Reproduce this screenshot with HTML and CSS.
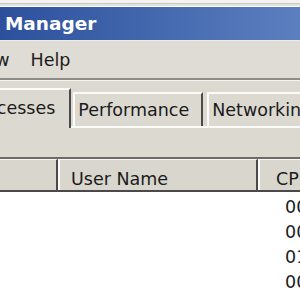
FILE: index.html
```html
<!DOCTYPE html>
<html lang="en">

<head>
    <meta charset="UTF-8">
    <title>Windows Task Manager</title>
    <link rel="stylesheet" href="styles.css">
</head>

<body>
    <div class="window">
        <div class="frame-top"></div>
        <div class="titlebar">
            <span class="title">Windows Task Manager</span>
        </div>
        <div class="menubar">
            <span class="menu-item">View</span>
            <span class="menu-item">Help</span>
        </div>
        <div class="panel">
            <div class="tabs">
                <div class="tab active">Processes</div>
                <div class="tab">Performance</div>
                <div class="tab">Networking</div>
            </div>
            <div class="list">
                <div class="list-head">
                    <div class="col"></div>
                    <div class="col user">User Name</div>
                    <div class="col cpu">CPU</div>
                </div>
                <div class="rows">
                    <div class="row"><span></span><span></span><span class="val">00</span></div>
                    <div class="row"><span></span><span></span><span class="val">00</span></div>
                    <div class="row"><span></span><span></span><span class="val">01</span></div>
                    <div class="row"><span></span><span></span><span class="val">00</span></div>
                </div>
            </div>
        </div>
    </div>
</body>

</html>
```

FILE: styles.css
```css
:root {
    --grau: #dcd9d1;
    --dunkel: #4a4a4a;
    --text: #1b1b1b;
}

html,
body {
    margin: 0;
    width: 300px;
    height: 300px;
    overflow: hidden;
    background-color: #fff;
    font-family: 'DejaVu Sans', Verdana, sans-serif;
    font-size: 17.5px;
    color: var(--text);
}

.window {
    width: 300px;
    overflow: hidden;
}

.frame-top {
    height: 3px;
    background-color: #f3f3f1;
    border-bottom: 1px solid #c9c9c6;
    box-shadow: 0 2px 0 #e3e2de;
    margin-bottom: 3px;
}

.titlebar {
    height: 33px;
    line-height: 33px;
    background: linear-gradient(to right, #2c509c, #5b7fbf);
    white-space: nowrap;
}

.title {
    display: inline-block;
    margin-left: -148px;
    font-weight: bold;
    font-size: 18.5px;
    color: #fff;
}

.menubar {
    display: flex;
    gap: 21px;
    height: 38px;
    line-height: 38px;
    background-color: #dfdcd5;
    border-top: 1px solid #eeece8;
    border-bottom: 2px solid #8e8c87;
    box-sizing: border-box;
    height: 40px;
    white-space: nowrap;
}

.menu-item:first-child {
    margin-left: -32px;
}

.panel {
    background-color: var(--grau);
    border-top: 1px solid #f4f3f0;
}

.tabs {
    display: flex;
    align-items: flex-end;
    padding-top: 7px;
    border-bottom: 2px solid #fbfbfa;
    white-space: nowrap;
}

.tab {
    box-sizing: border-box;
    height: 34px;
    line-height: 32px;
    border-top: 2px solid #fbfbfa;
    border-left: 2px solid #fbfbfa;
    border-right: 2px solid var(--dunkel);
    padding: 0 12px 0 3px;
    margin-right: 4px;
    background-color: var(--grau);
}

.tab:nth-child(2) {
    margin-left: 2px;
}

.tab.active {
    height: 40px;
    line-height: 36px;
    padding: 0 14px 2px 10px;
    margin-left: -43px;
    margin-right: 0;
    margin-bottom: -2px;
}

.list {
    margin-top: 29px;
    border-top: 2px solid #6c6b68;
    background-color: #fff;
}

.list-head,
.row {
    display: grid;
    grid-template-columns: 58px 200px 1fr;
}

.list-head {
    height: 33px;
    background-color: #d9d6ce;
    border-bottom: 2px solid var(--dunkel);
    box-sizing: border-box;
    height: 33px;
}

.col {
    box-sizing: border-box;
    border-top: 1px solid #f6f5f2;
    padding-top: 8px;
    line-height: 22px;
    white-space: nowrap;
    overflow: hidden;
}

.col:first-child {
    border-right: 2px solid var(--dunkel);
}

.col.user {
    border-left: 2px solid #fbfbfa;
    border-right: 2px solid var(--dunkel);
    padding-left: 11px;
}

.col.cpu {
    border-left: 2px solid #fbfbfa;
    padding-left: 16px;
}

.rows {
    padding-top: 3px;
}

.row {
    line-height: 25px;
}

.val {
    padding-left: 27px;
}
```
